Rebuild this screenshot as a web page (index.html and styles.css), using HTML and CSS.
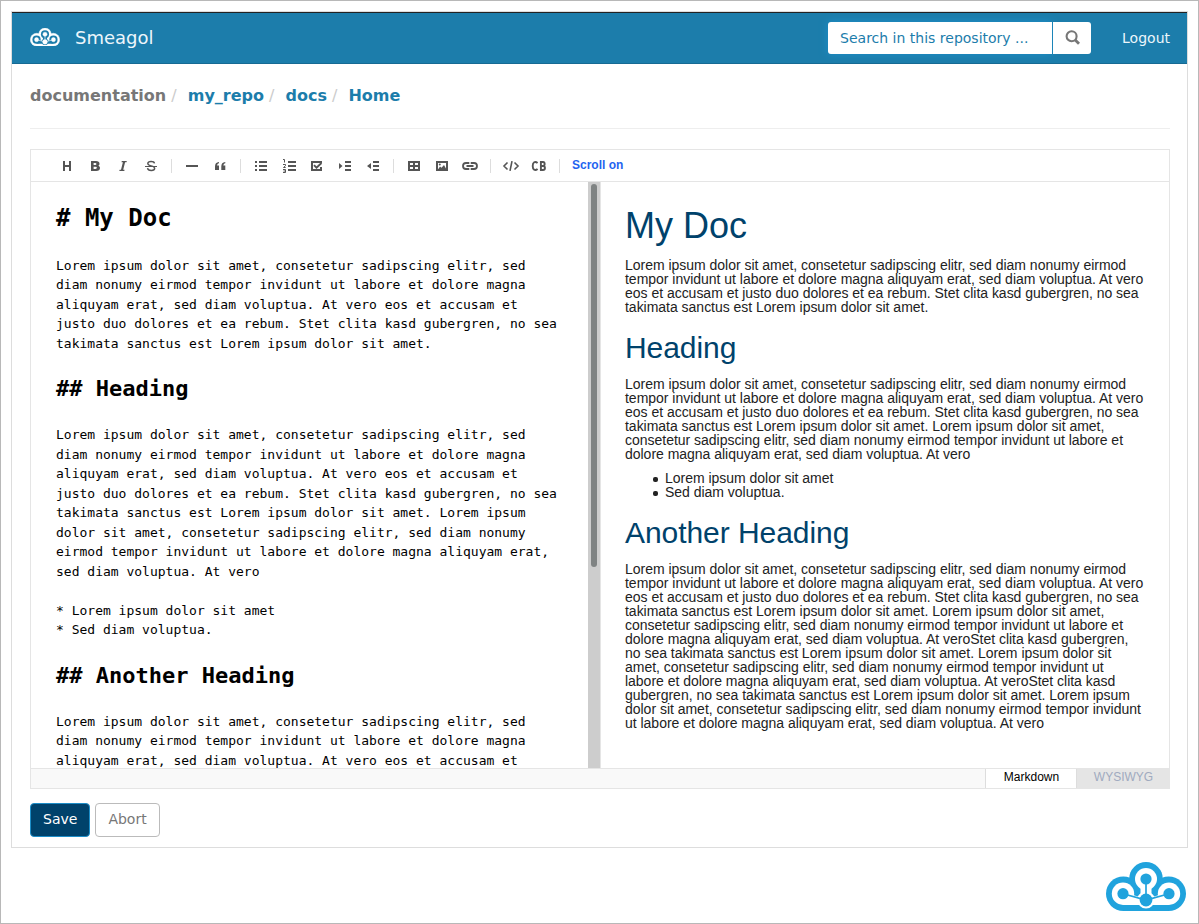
FILE: index.html
```html
<!DOCTYPE html>
<html lang="en">
<head>
<meta charset="utf-8">
<title>Smeagol</title>
<link rel="stylesheet" href="styles.css">
</head>
<body>
<svg class="defs" width="0" height="0">
  <symbol id="cloud" viewBox="0 0 80 49">
    <g class="c-main">
      <circle cx="17.3" cy="31.7" r="17.3"/><circle cx="62.7" cy="31.7" r="17.3"/><circle cx="40" cy="16.800" r="16.800"/><path d="M17.300 20h45.400v29H17.300z"/>
    </g>
    <g class="c-hole">
      <circle cx="17" cy="31.7" r="11.2"/><circle cx="63" cy="31.7" r="11.2"/><circle cx="40" cy="17" r="11"/>
      <circle cx="40" cy="38" r="8.600"/>
      <path d="M34.500 24h11v7.500l3 3 11-4 3.500 12.400H17L20.500 30.500l11 4 3-3z"/>
    </g>
    <g class="c-main">
      <circle class="dot" cx="17" cy="31.7" r="5.6"/><circle class="dot" cx="63" cy="31.7" r="5.6"/><circle class="dot" cx="40" cy="17" r="5.6"/><circle class="dot" cx="40" cy="38" r="6.4"/>
    </g>
    <path class="c-line" d="M40 17v21M17 31.7L40 38 63 31.7"/>
  </symbol>
</svg>
<div class="page">
  <div class="app">
    <header class="navbar">
      <svg class="brand-logo"><use href="#cloud"/></svg>
      <span class="brand">Smeagol</span>
      <div class="search">
        <div class="search-input">Search in this repository ...</div>
        <div class="search-btn"><svg width="16" height="16" viewBox="0 0 16 16" fill="none" stroke="#777"><circle cx="6.6" cy="6.2" r="5" stroke-width="2.1"/><path d="M10 9.8l4 3.9" stroke-width="2.8"/></svg></div>
      </div>
      <a class="logout">Logout</a>
    </header>
    <main class="content">
      <nav class="crumbs"><span class="crumb root">documentation</span><i>/</i><span class="crumb">my_repo</span><i>/</i><span class="crumb">docs</span><i>/</i><span class="crumb">Home</span></nav>
      <div class="editor">
        <div class="toolbar">
          <svg class="ic" viewBox="0 0 28 16"><path d="M10 3h2v4h4V3h2v10h-2V9h-4v4h-2z"/></svg>
          <svg class="ic" viewBox="0 0 28 16"><path fill-rule="evenodd" d="M10 3h5c2.200 0 3.500 1 3.500 2.700 0 1-.5 1.700-1.300 2 1.200.4 1.800 1.200 1.800 2.400 0 1.900-1.400 2.900-3.700 2.900H10zm2.600 2v2h1.700c1.500 0 1.500-2 0-2zm0 3.800V11h2c1.700 0 1.700-2.200 0-2.200z"/></svg>
          <svg class="ic" viewBox="0 0 28 16"><path d="M12.800 3h5l-.3 1.200h-1.400l-1.900 7.600h1.400l-.3 1.200h-5l.3-1.200H12l1.900-7.600h-1.400z"/></svg>
          <svg class="ic" viewBox="0 0 28 16"><path d="M17.500 5.300C17 3 11 2.800 10.800 5.500c0 3.200 6.900 1.500 6.900 4.900C17.500 13.300 11 13.200 10.500 10.200" fill="none" stroke="#555" stroke-width="1.400"/><path d="M8 8h12v1H8z"/></svg>
          <b class="sep"></b>
          <svg class="ic" viewBox="0 0 28 16"><path d="M8 7h12v2H8z"/></svg>
          <svg class="ic" viewBox="0 0 28 16"><path d="M13 4v1.200c-1.200.2-1.800.9-1.900 2.300H13V12H9V8.500C9 5.900 10.200 4.200 13 4zM19.300 4v1.200c-1.200.2-1.800.9-1.900 2.300h1.900V12h-4V8.500c0-2.600 1.200-4.300 4-4.500z"/></svg>
          <b class="sep"></b>
          <svg class="ic" viewBox="0 0 28 16"><path d="M8 3h2v2H8zM8 7h2v2H8zM8 11h2v2H8zM12 3h8v2h-8zM12 7h8v2h-8zM12 11h8v2h-8z"/></svg>
          <svg class="ic" viewBox="0 0 28 16"><path d="M13 3h8v2h-8zM13 7h8v2h-8zM13 11h8v2h-8z"/><path fill="none" stroke="#555" stroke-width="1" d="M8 1.500h1.500v3M8 6.500h2.500v1.200L8.500 9.500h2.200M8 11.500h2.500v3H8M8.500 13h2"/></svg>
          <svg class="ic" viewBox="0 0 28 16"><path d="M8 3h11v2h-9v6h7V9h2v4H8z"/><path d="M11 7.200l2.500 2.500L18.500 5" fill="none" stroke="#555" stroke-width="1.900"/></svg>
          <svg class="ic" viewBox="0 0 28 16"><path d="M8 5l3.500 3L8 11zM14 3h6v2h-6zM14 7h6v2h-6zM14 11h6v2h-6z"/></svg>
          <svg class="ic" viewBox="0 0 28 16"><path d="M12 5L8 8l4 3zM14 3h6v2h-6zM14 7h6v2h-6zM14 11h6v2h-6z"/></svg>
          <b class="sep"></b>
          <svg class="ic" viewBox="0 0 28 16"><path fill-rule="evenodd" d="M8 3h12v10H8zm2 2v2h3V5zm5 0v2h3V5zm-5 4v2h3V9zm5 0v2h3V9z"/></svg>
          <svg class="ic" viewBox="0 0 28 16"><path fill-rule="evenodd" d="M8 3h12v10H8zm2 2v6h8V5z"/><path d="M10 11.500l2-3 1.500 1.300L16 7l2.500 4.500z"/><circle cx="11.800" cy="6.500" r="1"/></svg>
          <svg class="ic" viewBox="0 0 28 16"><path d="M13.300 5H10a3 3 0 0 0 0 6h3.300M14.700 5H18a3 3 0 0 1 0 6h-3.300M10.500 8h7" fill="none" stroke="#555" stroke-width="1.800"/></svg>
          <b class="sep"></b>
          <svg class="ic" viewBox="0 0 28 16"><path d="M10.500 4.500L7 8l3.500 3.500M17.500 4.500L21 8l-3.500 3.500M15 3.200l-2 9.600" fill="none" stroke="#555" stroke-width="1.600"/></svg>
          <svg class="ic" viewBox="0 0 28 16"><path d="M12.600 5C10 2.800 7.700 4.300 7.700 8s2.300 5.200 4.900 3M15.900 4v8H18c2.600 0 2.600-4 0-4h-2 2c2.200 0 2.200-4 0-4z" fill="none" stroke="#555" stroke-width="1.900"/></svg>
          <b class="sep"></b>
          <span class="scroll-on">Scroll on</span>
        </div>
        <div class="panes">
          <div class="source">
<pre class="s1"># My Doc</pre>
<pre>

Lorem ipsum dolor sit amet, consetetur sadipscing elitr, sed
diam nonumy eirmod tempor invidunt ut labore et dolore magna
aliquyam erat, sed diam voluptua. At vero eos et accusam et
justo duo dolores et ea rebum. Stet clita kasd gubergren, no sea
takimata sanctus est Lorem ipsum dolor sit amet.
 </pre>
<pre class="s2 first">## Heading</pre>
<pre>

Lorem ipsum dolor sit amet, consetetur sadipscing elitr, sed
diam nonumy eirmod tempor invidunt ut labore et dolore magna
aliquyam erat, sed diam voluptua. At vero eos et accusam et
justo duo dolores et ea rebum. Stet clita kasd gubergren, no sea
takimata sanctus est Lorem ipsum dolor sit amet. Lorem ipsum
dolor sit amet, consetetur sadipscing elitr, sed diam nonumy
eirmod tempor invidunt ut labore et dolore magna aliquyam erat,
sed diam voluptua. At vero

* Lorem ipsum dolor sit amet
* Sed diam voluptua.
 </pre>
<pre class="s2">## Another Heading</pre>
<pre>

Lorem ipsum dolor sit amet, consetetur sadipscing elitr, sed
diam nonumy eirmod tempor invidunt ut labore et dolore magna
aliquyam erat, sed diam voluptua. At vero eos et accusam et</pre>
          </div>
          <div class="scrollbar"><div class="thumb"></div></div>
          <article class="preview">
            <h1>My Doc</h1>
            <p>Lorem ipsum dolor sit amet, consetetur sadipscing elitr, sed diam nonumy eirmod<br>tempor invidunt ut labore et dolore magna aliquyam erat, sed diam voluptua. At vero<br>eos et accusam et justo duo dolores et ea rebum. Stet clita kasd gubergren, no sea<br>takimata sanctus est Lorem ipsum dolor sit amet.</p>
            <h2>Heading</h2>
            <p>Lorem ipsum dolor sit amet, consetetur sadipscing elitr, sed diam nonumy eirmod<br>tempor invidunt ut labore et dolore magna aliquyam erat, sed diam voluptua. At vero<br>eos et accusam et justo duo dolores et ea rebum. Stet clita kasd gubergren, no sea<br>takimata sanctus est Lorem ipsum dolor sit amet. Lorem ipsum dolor sit amet,<br>consetetur sadipscing elitr, sed diam nonumy eirmod tempor invidunt ut labore et<br>dolore magna aliquyam erat, sed diam voluptua. At vero</p>
            <ul><li>Lorem ipsum dolor sit amet</li><li>Sed diam voluptua.</li></ul>
            <h2>Another Heading</h2>
            <p>Lorem ipsum dolor sit amet, consetetur sadipscing elitr, sed diam nonumy eirmod<br>tempor invidunt ut labore et dolore magna aliquyam erat, sed diam voluptua. At vero<br>eos et accusam et justo duo dolores et ea rebum. Stet clita kasd gubergren, no sea<br>takimata sanctus est Lorem ipsum dolor sit amet. Lorem ipsum dolor sit amet,<br>consetetur sadipscing elitr, sed diam nonumy eirmod tempor invidunt ut labore et<br>dolore magna aliquyam erat, sed diam voluptua. At veroStet clita kasd gubergren,<br>no sea takimata sanctus est Lorem ipsum dolor sit amet. Lorem ipsum dolor sit<br>amet, consetetur sadipscing elitr, sed diam nonumy eirmod tempor invidunt ut<br>labore et dolore magna aliquyam erat, sed diam voluptua. At veroStet clita kasd<br>gubergren, no sea takimata sanctus est Lorem ipsum dolor sit amet. Lorem ipsum<br>dolor sit amet, consetetur sadipscing elitr, sed diam nonumy eirmod tempor invidunt<br>ut labore et dolore magna aliquyam erat, sed diam voluptua. At vero</p>
          </article>
        </div>
        <div class="modes"><div class="mode active">Markdown</div><div class="mode">WYSIWYG</div></div>
      </div>
      <div class="actions"><div class="btn save">Save</div><div class="btn">Abort</div></div>
    </main>
  </div>
  <footer class="footer"><svg class="foot-logo"><use href="#cloud"/></svg></footer>
</div>
</body>
</html>
```
FILE: styles.css
```css
* { box-sizing: border-box; }
body { margin: 0; background: #fff; font: 14px/20px "DejaVu Sans", sans-serif; }
.defs { display: block; position: absolute; }
.page { height: 924px; border: 1px solid #b8b8b8; padding: 10px 10px 0; overflow: hidden; }
.app { height: 837px; border: 1px solid #ddd; }
.navbar { height: 52px; background: #1c7dab; border-top: 1px solid #222; border-bottom: 1px solid #176a93; display: flex; align-items: center; padding: 0 17px 0 18px; }
.brand-logo { width: 30px; height: 18px; color: #fff; --hole: #1c7dab; --edge: 1.2; flex: none; margin-top: -2px; overflow: visible; }
.c-main { fill: currentColor; stroke: currentColor; stroke-width: var(--edge); }
.c-hole { fill: var(--hole); }
.c-line { stroke: currentColor; stroke-width: 1.7; fill: none; }
.brand { margin-left: 15px; font-size: 18px; color: #ecf6fb; }
.search { margin-left: auto; display: flex; height: 32px; }
.search-input { width: 224px; background: #fff; color: #1c7dab; padding: 6px 12px; border-radius: 3px 0 0 3px; box-shadow: 0 0 8px #1e90ca; }
.search-btn { width: 38px; margin-left: 1px; background: #fff; border-radius: 0 3px 3px 0; display: flex; justify-content: center; padding: 8px 0 0 1px; }
.logout { margin-left: 31px; color: #ecf6fb; }
.content { padding: 0 17px 0 18px; }
.crumbs { height: 65px; padding-top: 21px; border-bottom: 1px solid #eee; font-size: 16px; line-height: 22px; font-weight: bold; color: #1c7dab; display: flex; }
.crumbs i { font-style: normal; font-weight: normal; color: #ccc; width: 21.5px; padding-left: 5px; }
.root { color: #777; }
.editor { margin-top: 20px; height: 640px; border: 1px solid #e5e5e5; }
.toolbar { height: 32px; border-bottom: 1px solid #e5e5e5; display: flex; align-items: center; padding: 1px 0 0 22px; }
.ic { width: 28px; height: 16px; fill: #555; flex: none; }
.sep { width: 1px; height: 14px; background: #ddd; margin: 0 6px; }
.scroll-on { margin: -3px 0 0 6px; font: bold 12px "Liberation Sans", sans-serif; color: #1f64f0; }
.panes { height: 586px; display: flex; overflow: hidden; }
.source { width: 557px; padding: 18px 0 0 25px; flex: none; overflow: hidden; }
.source pre { margin: 0; font: 13px/19.5px "DejaVu Sans Mono", monospace; color: #000; }
.source .s1 { font-size: 24px; line-height: 36px; font-weight: bold; }
.source .s2 { font-size: 22px; line-height: 33px; font-weight: bold; }
.source .first { line-height: 32px; padding-bottom: 1px; }
.scrollbar { width: 12px; background: #cdcdcd; padding: 2px 3px; }
.thumb { width: 6px; height: 383px; border-radius: 3px; background: #7f8383; }
.preview { border-left: 1px solid #e5e5e5; padding: 24px 0 0 24px; font: 14px/14px "Liberation Sans", sans-serif; letter-spacing: -.02px; color: #222; white-space: nowrap; }
.preview h1, .preview h2 { font-weight: normal; color: #00426b; margin: 17px 0 13px; line-height: 33px; font-size: 30px; letter-spacing: -.06px; }
.preview h1 { font-size: 36px; line-height: 40px; margin: 0 0 12px; letter-spacing: 0; }
.preview p { margin: 0 0 10px; }
.preview ul { margin: 0; padding-left: 28px; list-style: none; }
.preview li { display: flex; align-items: center; }
.preview li::before { content: ""; width: 5px; height: 5px; border-radius: 2px; background: #222; margin: 3px 7px 0 0; }
.modes { height: 20px; border-top: 1px solid #e5e5e5; background: #f9f9f9; display: flex; justify-content: flex-end; font: 12px/16px "Liberation Sans", sans-serif; text-align: center; }
.mode { width: 93px; background: #e5e5e5; color: #a0aabf; border-left: 1px solid #ddd; padding-left: 1px; }
.mode.active { width: 91px; background: #fff; color: #000; }
.actions { display: flex; gap: 5px; margin-top: 14px; }
.btn { height: 34px; border: 1px solid #bbb; border-radius: 4px; padding: 5px 12px; color: #777; }
.save { background: #00426b; border-color: #1c8dc8; color: #fff; }
.footer { display: flex; justify-content: flex-end; padding: 14px 2px 0 0; }
.foot-logo { width: 80px; height: 49px; color: #20a3dd; --hole: #fff; --edge: 0; }
```
